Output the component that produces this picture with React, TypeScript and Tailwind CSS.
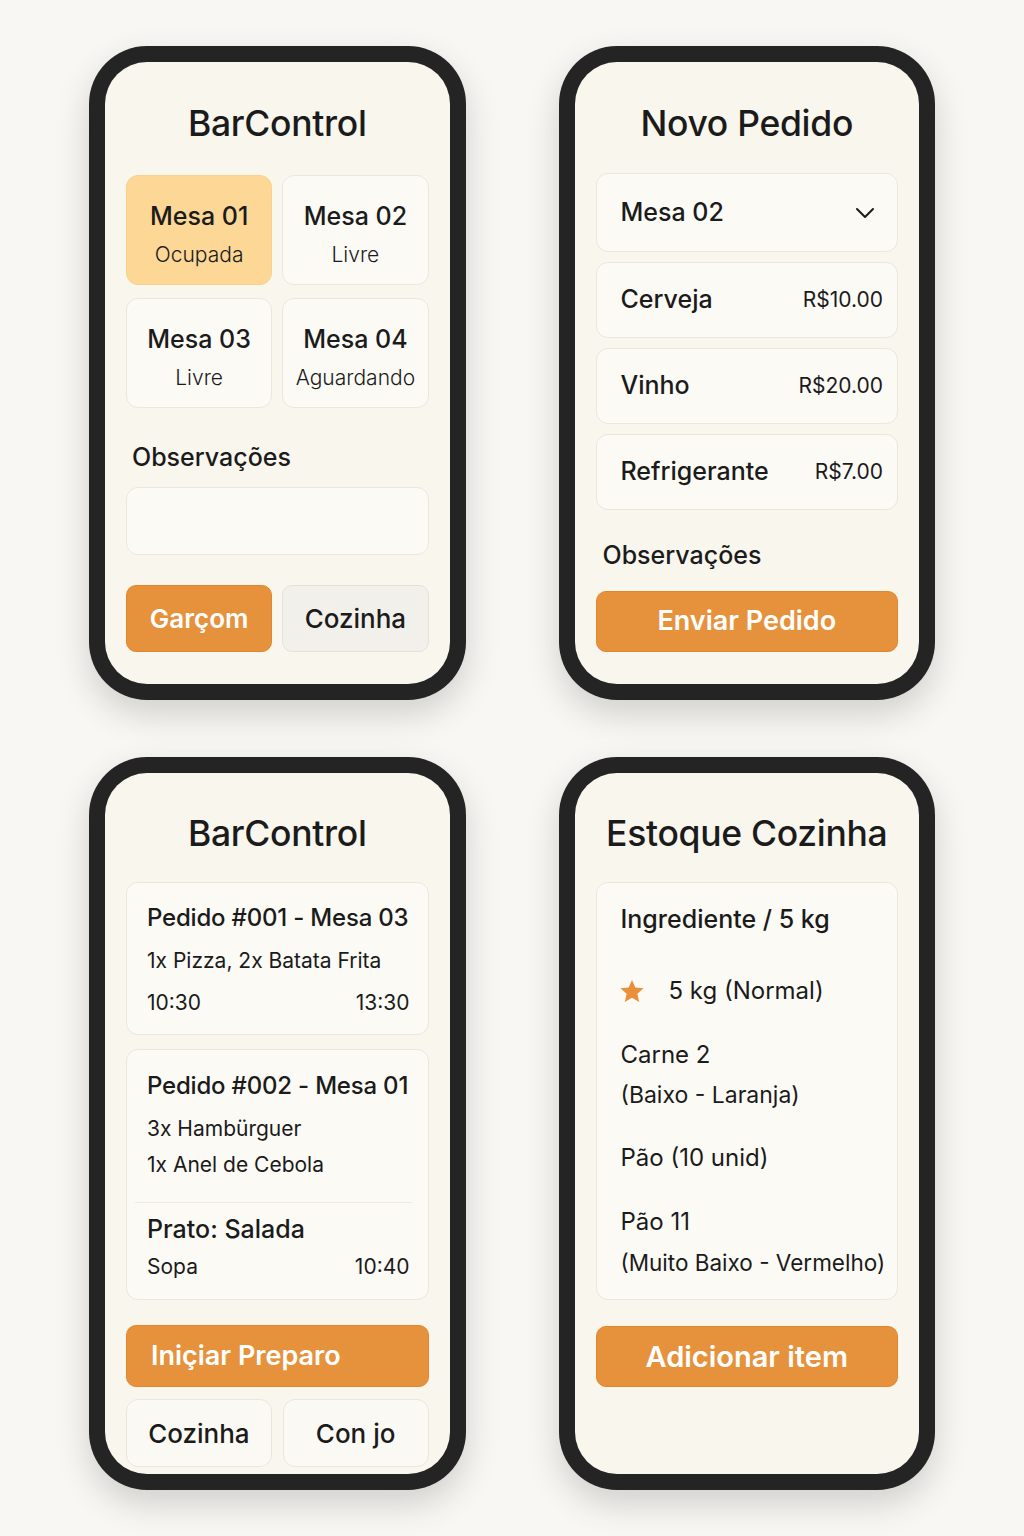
import React from "react";

const font = { fontFamily: "Inter, 'Noto Sans', sans-serif" };

function Phone({ h, children }: { h: string; children: React.ReactNode }) {
  return (
    <div className={`rounded-[58px] bg-[#242424] p-[16px] shadow-[0_14px_34px_rgba(0,0,0,0.16)] ${h}`}>
      <div className="h-full rounded-[42px] bg-[#f9f6ee] overflow-hidden px-[21px] text-[#1b1b1b]">
        {children}
      </div>
    </div>
  );
}

function Title({ children }: { children: React.ReactNode }) {
  return (
    <div className="h-[44px] flex items-center justify-center text-[35.5px] font-medium tracking-[-0.3px] whitespace-nowrap">
      {children}
    </div>
  );
}

function Mesa({ name, status, active }: { name: string; status: string; active?: boolean }) {
  return (
    <div
      className={`h-[110px] rounded-[12px] border flex flex-col items-center pt-[24px] ${
        active ? "bg-[#fcd795] border-[#f8d18c]" : "bg-[#fcfaf5] border-[#ebe7df]"
      }`}
    >
      <div className="h-[32px] leading-[32px] text-[25px] font-medium">{name}</div>
      <div className="h-[28px] leading-[28px] mt-[9px] text-[21px] font-light">{status}</div>
    </div>
  );
}

function Item({ name, price }: { name: string; price: string }) {
  return (
    <div className="h-[76px] rounded-[12px] border border-[#ebe7df] bg-[#fcfaf5] flex items-center justify-between pl-[24px] pr-[14px]">
      <span className="text-[25px] font-medium">{name}</span>
      <span className="text-[21px]">{price}</span>
    </div>
  );
}

export default function App() {
  return (
    <div style={font} className="w-[1024px] h-[1536px] bg-[#f8f7f3] pt-[46px] px-[89px]">
      <div className="grid grid-cols-2 gap-x-[93px] gap-y-[57px]">
        {/* Phone 1 */}
        <Phone h="h-[654px]">
          <div className="pt-[40px]">
            <Title>BarControl</Title>
          </div>
          <div className="mt-[29px] grid grid-cols-2 gap-x-[10px] gap-y-[13px]">
            <Mesa name="Mesa 01" status="Ocupada" active />
            <Mesa name="Mesa 02" status="Livre" />
            <Mesa name="Mesa 03" status="Livre" />
            <Mesa name="Mesa 04" status="Aguardando" />
          </div>
          <div className="mt-[33px] h-[32px] leading-[32px] pl-[6px] text-[25px] font-medium">Observações</div>
          <div className="mt-[14px] h-[68px] rounded-[12px] border border-[#ebe7df] bg-[#fcfaf5]" />
          <div className="mt-[30px] grid grid-cols-2 gap-x-[10px]">
            <div className="h-[67px] rounded-[10px] bg-[#e6923c] border border-[#e3862f] flex items-center justify-center text-white text-[26px] font-semibold">
              Garçom
            </div>
            <div className="h-[67px] rounded-[10px] bg-[#f2f0eb] border border-[#e4e1da] flex items-center justify-center text-[26px] font-medium">
              Cozinha
            </div>
          </div>
        </Phone>

        {/* Phone 2 */}
        <Phone h="h-[654px]">
          <div className="pt-[40px]">
            <Title>Novo Pedido</Title>
          </div>
          <div className="mt-[27px] h-[79px] rounded-[12px] border border-[#ebe7df] bg-[#fcfaf5] flex items-center justify-between pl-[24px] pr-[22px]">
            <span className="text-[25px] font-medium">Mesa 02</span>
            <svg width="20" height="12" viewBox="0 0 20 12" fill="none">
              <path d="M2 2l8 8 8-8" stroke="#1b1b1b" strokeWidth="2" strokeLinecap="round" strokeLinejoin="round" />
            </svg>
          </div>
          <div className="mt-[10px] flex flex-col gap-[10px]">
            <Item name="Cerveja" price="R$10.00" />
            <Item name="Vinho" price="R$20.00" />
            <Item name="Refrigerante" price="R$7.00" />
          </div>
          <div className="mt-[29px] h-[32px] leading-[32px] pl-[7px] text-[25px] font-medium">Observações</div>
          <div className="mt-[20px] h-[61px] rounded-[10px] bg-[#e6923c] border border-[#e3862f] flex items-center justify-center text-white text-[27px] font-semibold">
            Enviar Pedido
          </div>
        </Phone>

        {/* Phone 3 */}
        <Phone h="h-[733px]">
          <div className="pt-[39px]">
            <Title>BarControl</Title>
          </div>
          <div className="mt-[26px] h-[153px] rounded-[12px] border border-[#ebe7df] bg-[#fcfaf5] pt-[19px] pl-[20px] pr-[18px]">
            <div className="h-[32px] leading-[32px] text-[24px] font-medium whitespace-nowrap tracking-[-0.2px]">Pedido #001 - Mesa 03</div>
            <div className="mt-[13px] h-[28px] leading-[28px] text-[21px]">1x Pizza, 2x Batata Frita</div>
            <div className="mt-[14px] h-[28px] leading-[28px] text-[21px] flex justify-between">
              <span>10:30</span>
              <span>13:30</span>
            </div>
          </div>
          <div className="mt-[14px] h-[251px] rounded-[12px] border border-[#ebe7df] bg-[#fcfaf5] pt-[20px]">
            <div className="pl-[20px] pr-[18px]">
              <div className="h-[32px] leading-[32px] text-[24px] font-medium whitespace-nowrap tracking-[-0.2px]">Pedido #002 - Mesa 01</div>
              <div className="mt-[13px] h-[28px] leading-[28px] text-[21px]">3x Hambürguer</div>
              <div className="mt-[8px] h-[28px] leading-[28px] text-[21px]">1x Anel de Cebola</div>
            </div>
            <div className="mt-[23px] ml-[8px] mr-[16px] h-px bg-[#eeeae2]" />
            <div className="pl-[20px] pr-[18px]">
              <div className="mt-[10px] h-[32px] leading-[32px] text-[25px] font-medium">Prato: Salada</div>
              <div className="mt-[8px] h-[28px] leading-[28px] text-[21px] flex justify-between">
                <span>Sopa</span>
                <span>10:40</span>
              </div>
            </div>
          </div>
          <div className="mt-[25px] h-[62px] rounded-[10px] bg-[#e6923c] border border-[#e3862f] flex items-center pl-[24px] text-white text-[27px] font-semibold">
            Iniçiar Preparo
          </div>
          <div className="mt-[12px] grid grid-cols-2 gap-x-[11px]">
            <div className="h-[68px] rounded-[12px] bg-[#fbf9f4] border border-[#e9e6de] flex items-center justify-center text-[26px] font-medium">
              Cozinha
            </div>
            <div className="h-[68px] rounded-[12px] bg-[#fbf9f4] border border-[#e9e6de] flex items-center justify-center text-[26px] font-medium">
              Con jo
            </div>
          </div>
        </Phone>

        {/* Phone 4 */}
        <Phone h="h-[733px]">
          <div className="pt-[39px]">
            <Title>Estoque Cozinha</Title>
          </div>
          <div className="mt-[26px] h-[418px] rounded-[12px] border border-[#ebe7df] bg-[#fcfaf5] pt-[20px] pl-[24px] text-[24px]">
            <div className="h-[32px] leading-[32px] text-[25px] font-medium">Ingrediente / 5 kg</div>
            <div className="mt-[40px] h-[32px] leading-[32px] flex items-center">
              <svg width="28" height="28" viewBox="0 0 24 24" className="ml-[-3px]">
                <path
                  d="M12 2.5l2.9 6.6 7.1.6-5.4 4.7 1.6 7-6.2-3.7-6.2 3.7 1.6-7L2 9.7l7.1-.6z"
                  fill="#e8903a"
                />
              </svg>
              <span className="ml-[23px]">5 kg (Normal)</span>
            </div>
            <div className="mt-[32px] h-[32px] leading-[32px]">Carne 2</div>
            <div className="mt-[8px] h-[32px] leading-[32px] text-[23px]">(Baixo - Laranja)</div>
            <div className="mt-[31px] h-[32px] leading-[32px]">Pão (10 unid)</div>
            <div className="mt-[32px] h-[32px] leading-[32px]">Pão 11</div>
            <div className="mt-[9px] h-[32px] leading-[32px] text-[22.5px] whitespace-nowrap">(Muito Baixo - Vermelho)</div>
          </div>
          <div className="mt-[26px] h-[61px] rounded-[10px] bg-[#e6923c] border border-[#e3862f] flex items-center justify-center text-white text-[29px] font-semibold">
            Adicionar item
          </div>
        </Phone>
      </div>
    </div>
  );
}
